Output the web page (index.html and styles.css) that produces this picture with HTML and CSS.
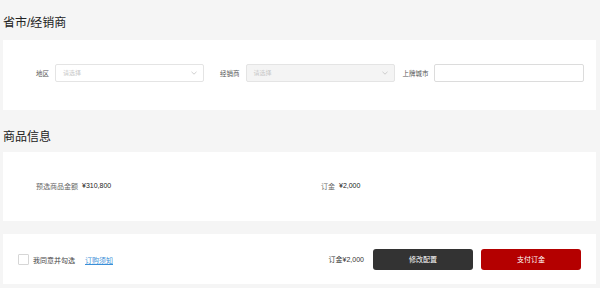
FILE: index.html
```html
<!DOCTYPE html>
<html lang="zh">
<head>
<meta charset="utf-8">
<title>订单</title>
<link rel="stylesheet" href="styles.css">
</head>
<body>
<div class="page">
  <section class="section">
    <h2 class="title">省市/经销商</h2>
    <div class="card card-form">
      <div class="field field-area">
        <span class="label">地区</span>
        <div class="select">
          <span class="placeholder">请选择</span>
          <svg class="chev" width="6" height="4" viewBox="0 0 6 4"><path d="M0.5 0.8 L3 3.2 L5.5 0.8" fill="none" stroke="#bbb" stroke-width="0.7"/></svg>
        </div>
      </div>
      <div class="field field-dealer">
        <span class="label">经销商</span>
        <div class="select select-disabled">
          <span class="placeholder">请选择</span>
          <svg class="chev" width="6" height="4" viewBox="0 0 6 4"><path d="M0.5 0.8 L3 3.2 L5.5 0.8" fill="none" stroke="#bbb" stroke-width="0.7"/></svg>
        </div>
      </div>
      <div class="field field-city">
        <span class="label">上牌城市</span>
        <div class="input"></div>
      </div>
    </div>
  </section>
  <section class="section">
    <h2 class="title">商品信息</h2>
    <div class="card card-info">
      <div class="info"><span class="info-label">预选商品金额</span><span class="info-value">¥310,800</span></div>
      <div class="info info-right"><span class="info-label">订金</span><span class="info-value">¥2,000</span></div>
    </div>
  </section>
  <div class="card card-bar">
    <label class="agree">
      <span class="checkbox"></span>
      <span class="agree-text">我同意并勾选</span>
      <a class="link" href="#">订购须知</a>
    </label>
    <div class="actions">
      <span class="deposit">订金¥2,000</span>
      <button class="btn btn-dark">修改配置</button>
      <button class="btn btn-red">支付订金</button>
    </div>
  </div>
</div>
</body>
</html>
```

FILE: styles.css
```css
* { box-sizing: border-box; }
html, body { margin: 0; padding: 0; }
body {
  background: #f5f5f5;
  font-family: "Liberation Sans", "Noto Sans CJK SC", sans-serif;
  color: #333;
  width: 600px;
  height: 288px;
  overflow: hidden;
}
.page {
  padding: 0 4px 0 3px;
}
.title {
  margin: 0;
  font-size: 12px;
  font-weight: 400;
  line-height: 24px;
  padding: 11px 0 5px 0;
  color: #222;
}
.section + .section .title {
  padding: 15px 0 3px 0;
}
.card {
  background: #fff;
}
.card-form {
  display: flex;
  align-items: center;
  height: 70px;
  padding: 0 0 5px 0;
}
.field {
  display: flex;
  align-items: center;
  gap: 6px;
}
.field-area { margin-left: 33px; }
.field-dealer { margin-left: 16px; }
.field-city { margin-left: 8px; gap: 5px; }
.label {
  font-size: 6.5px;
  color: #555;
  white-space: nowrap;
}
.select, .input {
  width: 149px;
  height: 18px;
  border: 1px solid #e4e4e4;
  border-radius: 2px;
  background: #fff;
  display: flex;
  align-items: center;
  justify-content: space-between;
  padding: 0 6px 0 7px;
}
.input { width: 150px; border-color: #dcdcdc; }
.select-disabled { background: #f4f4f4; }
.placeholder {
  font-size: 6px;
  color: #c8c8c8;
}
.chev { display: block; }
.card-info {
  height: 69px;
  display: flex;
  align-items: center;
  padding-bottom: 2px;
}
.info {
  display: flex;
  align-items: center;
  gap: 4px;
  font-size: 7px;
}
.info:first-child { margin-left: 33px; width: 285px; }
.info-label { color: #666; }
.info-value { color: #222; }
.card-bar {
  margin-top: 13px;
  height: 50px;
  display: flex;
  align-items: center;
  justify-content: space-between;
  padding: 0 15px 0 15px;
}
.agree {
  display: flex;
  align-items: center;
  font-size: 7px;
  padding-top: 1px;
}
.checkbox {
  width: 11px;
  height: 11px;
  border: 1px solid #d6d6d6;
  border-radius: 1px;
  background: #fff;
  margin-right: 4px;
}
.agree-text { color: #444; margin-right: 10px; }
.link {
  color: #3a8fd8;
  text-decoration: underline;
}
.actions {
  display: flex;
  align-items: center;
}
.deposit {
  font-size: 7px;
  color: #333;
  margin-right: 9px;
}
.btn {
  width: 100px;
  height: 21px;
  border: 0;
  border-radius: 3px;
  font-family: inherit;
  font-size: 7px;
  color: #fff;
  padding: 0;
}
.btn-dark { background: #333; }
.btn-red { background: #b40000; margin-left: 8px; }
```
